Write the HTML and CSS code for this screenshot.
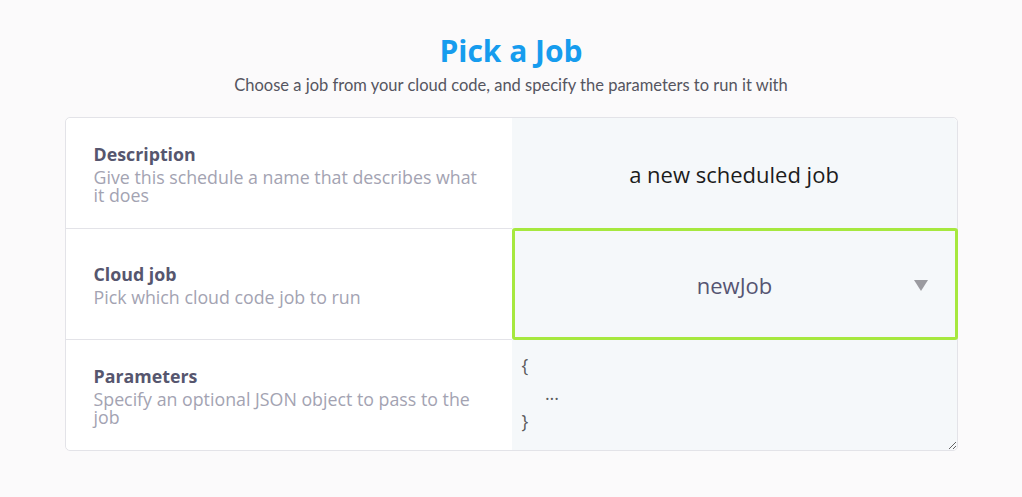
FILE: index.html
```html
<!DOCTYPE html>
<html>
<head>
<meta charset="utf-8">
<link rel="stylesheet" href="styles.css">
</head>
<body>
<div class="page">
  <header class="head">
    <h1 class="title">Pick a Job</h1>
    <p class="subtitle">Choose a job from your cloud code, and specify the parameters to run it with</p>
  </header>
  <div class="card">
    <div class="row">
      <div class="label-cell">
        <div class="label">Description</div>
        <div class="desc">Give this schedule a name that describes what it does</div>
      </div>
      <div class="field-cell">
        <input class="text-input" type="text" value="a new scheduled job">
      </div>
    </div>
    <div class="row">
      <div class="label-cell">
        <div class="label">Cloud job</div>
        <div class="desc">Pick which cloud code job to run</div>
      </div>
      <div class="field-cell select-cell">
        <div class="select">
          <span class="select-value">newJob</span>
          <span class="caret"></span>
        </div>
      </div>
    </div>
    <div class="row last">
      <div class="label-cell">
        <div class="label">Parameters</div>
        <div class="desc">Specify an optional JSON object to pass to the job</div>
      </div>
      <div class="field-cell">
        <textarea class="json">{
     ...
}</textarea>
      </div>
    </div>
  </div>
</div>
</body>
</html>
```
FILE: styles.css
```css
* { box-sizing: border-box; }
html, body { margin: 0; padding: 0; }
body {
  background: #fbfafb;
  font-family: "Open Sans", "DejaVu Sans", sans-serif;
}
.page {
  width: 893px;
  margin: 0 auto;
}
.head {
  text-align: center;
  padding-top: 32px;
}
.title {
  margin: 0;
  font-size: 30px;
  line-height: 38px;
  font-weight: 700;
  color: #169cee;
}
.subtitle {
  margin: 5px 0 0;
  font-family: Lato, "Open Sans", sans-serif;
  font-size: 16.5px;
  line-height: 20px;
  color: #555560;
}
.card {
  margin-top: 22px;
  border: 1px solid #e3e3e8;
  border-radius: 5px;
  background: #fff;
}
.row {
  display: grid;
  grid-template-columns: 446px 1fr;
  height: 111px;
}
.row.last { height: 110px; }
.label-cell {
  display: flex;
  flex-direction: column;
  justify-content: center;
  padding: 0 28px 0 28px;
  border-bottom: 1px solid #e3e3e8;
  background: #fff;
  border-radius: 5px 0 0 0;
}
.row:nth-child(2) .label-cell { border-radius: 0; }
.row.last .label-cell { border-bottom: none; border-radius: 0 0 0 5px; }
.label {
  font-size: 17.8px;
  line-height: 23px;
  font-weight: 700;
  color: #56566e;
}
.desc {
  margin-top: 2px;
  font-size: 17.8px;
  line-height: 18px;
  color: #a3a3b2;
}
.field-cell {
  background: #f5f8fa;
  display: flex;
  align-items: center;
  position: relative;
}
.row:first-child .field-cell { border-radius: 0 5px 0 0; }
.row.last .field-cell { border-radius: 0 0 5px 0; }
.text-input {
  width: 100%;
  border: none;
  background: transparent;
  text-align: center;
  font-family: "Open Sans", sans-serif;
  font-size: 22px;
  color: #1c1c1c;
  outline: none;
  padding: 0;
  margin-top: 1px;
}
.select-cell { align-items: stretch; }
.select {
  position: relative;
  flex: 1;
  margin: -1px -1px 0 0;
  border: 3px solid #a6e83e;
  border-radius: 3px;
  display: flex;
  align-items: center;
  justify-content: center;
}
.select-value {
  font-size: 22px;
  color: #555572;
  margin-top: 1px;
}
.caret {
  position: absolute;
  right: 27px;
  top: 50%;
  margin-top: -4px;
  width: 0;
  height: 0;
  border-left: 7px solid transparent;
  border-right: 7px solid transparent;
  border-top: 11px solid #9b9ba0;
}
.json {
  display: block;
  width: 100%;
  height: 100%;
  border: none;
  background: transparent;
  font-family: "Open Sans", sans-serif;
  font-size: 18px;
  line-height: 28px;
  color: #5a5a5a;
  padding: 11px 10px 4px;
  outline: none;
  margin: 0;
  resize: both;
}
```
